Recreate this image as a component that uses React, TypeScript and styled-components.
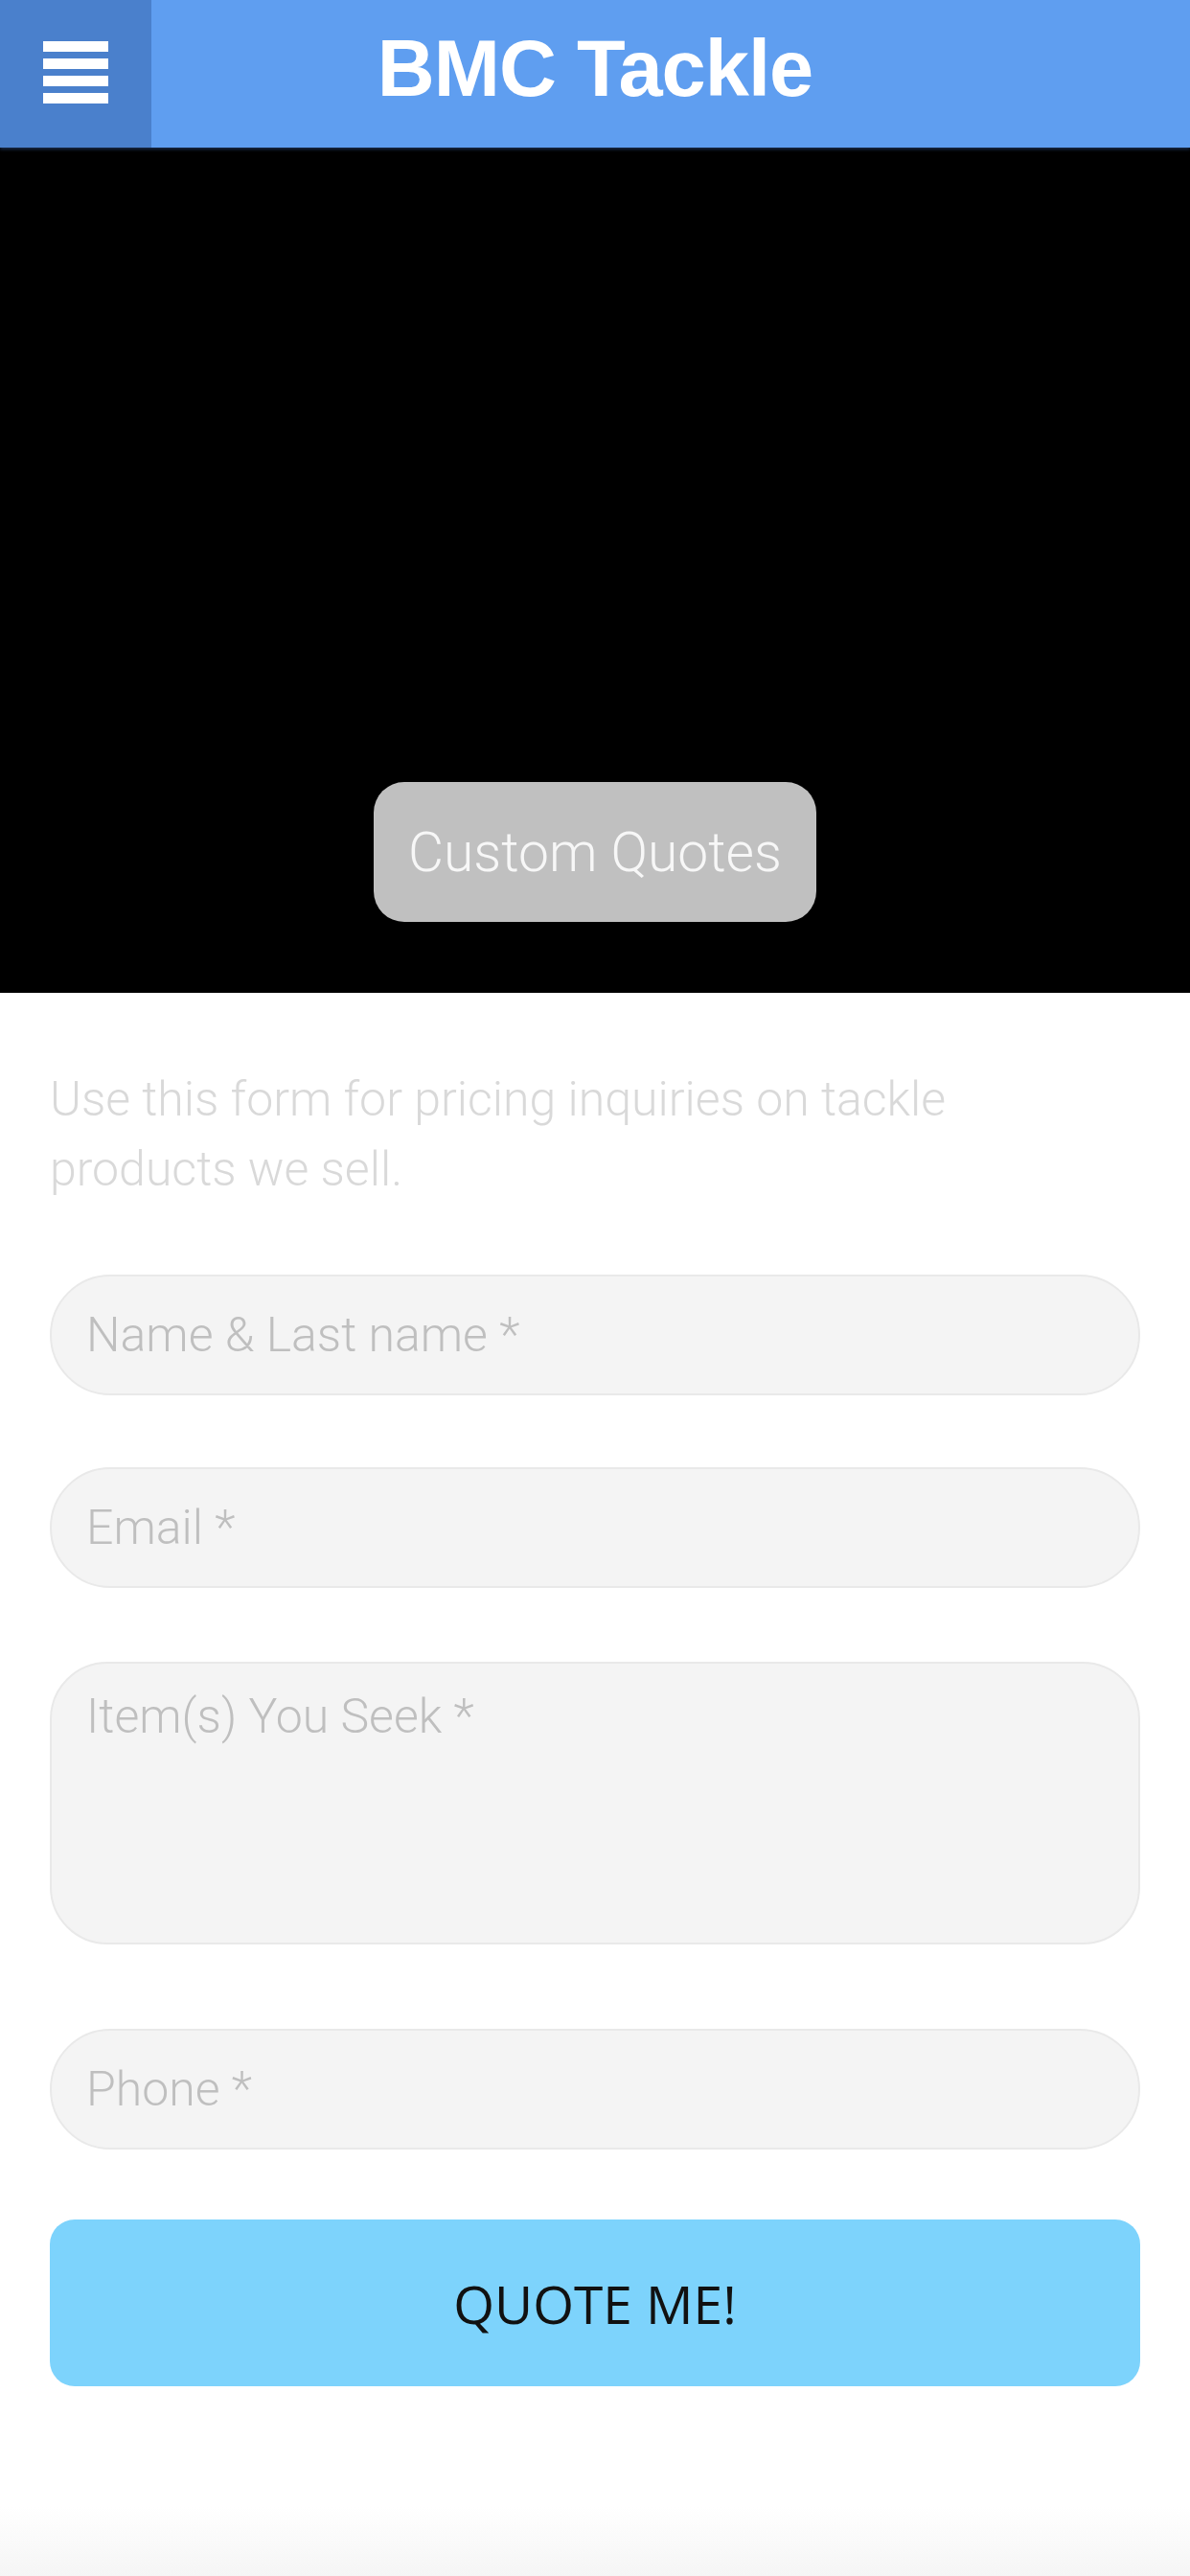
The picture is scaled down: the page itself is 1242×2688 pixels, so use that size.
import React from "react";
import styled, { createGlobalStyle } from "styled-components";

const Global = createGlobalStyle`
  html, body { margin: 0; padding: 0; background: #ffffff; }
  * { box-sizing: border-box; }
`;

const Page = styled.div`
  min-height: 2688px;
  display: flex;
  flex-direction: column;
  background: #ffffff;
`;

const Header = styled.header`
  height: 154px;
  display: grid;
  grid-template-columns: 158px 1fr 158px;
  align-items: center;
  background: #5f9ef0;
  box-shadow: 0 2px 3px rgba(40, 70, 120, 0.6);
  position: relative;
  z-index: 1;
`;

const MenuButton = styled.button`
  height: 154px;
  width: 158px;
  border: none;
  padding: 0 0 4px;
  margin: 0;
  background: #4a80cc;
  display: flex;
  flex-direction: column;
  align-items: center;
  justify-content: center;
  gap: 7px;
`;

const MenuBar = styled.span`
  display: block;
  width: 68px;
  height: 11px;
  background: #ffffff;
`;

const Title = styled.h1`
  margin: 0;
  padding-bottom: 10px;
  text-align: center;
  color: #ffffff;
  font-family: "Liberation Sans", Arial, sans-serif;
  font-weight: 700;
  font-size: 83px;
  letter-spacing: -1px;
`;

const Hero = styled.section`
  height: 882px;
  background: #000000;
  display: flex;
  flex-direction: column;
  align-items: center;
  justify-content: flex-end;
  padding-bottom: 74px;
`;

const HeroButton = styled.button`
  width: 462px;
  height: 146px;
  border: none;
  border-radius: 32px;
  background: #c0c0c0;
  color: #f7f7f7;
  font-family: Roboto, "Noto Sans", sans-serif;
  font-weight: 300;
  font-size: 57px;
  padding: 0;
`;

const Content = styled.main`
  padding: 75px 52px 0;
  display: flex;
  flex-direction: column;
`;

const Intro = styled.p`
  margin: 0 0 73px;
  color: #d9d9d9;
  font-family: Roboto, "Noto Sans", sans-serif;
  font-weight: 300;
  font-size: 50px;
  line-height: 73px;
`;

const Form = styled.form`
  display: flex;
  flex-direction: column;
`;

const fieldBase = `
  width: 100%;
  background: #f4f4f4;
  border: 2px solid #e9e9e9;
  color: #555;
  font-family: Roboto, "Noto Sans", sans-serif;
  font-weight: 300;
  font-size: 50px;
  outline: none;
  &::placeholder { color: #bfbfbf; opacity: 1; }
`;

const Field = styled.input<{ $gap: number }>`
  ${fieldBase}
  height: 126px;
  border-radius: 63px;
  padding: 0 36px;
  margin: 0 0 ${(p) => p.$gap}px;
`;

const Area = styled.textarea<{ $gap: number }>`
  ${fieldBase}
  height: 295px;
  border-radius: 60px;
  padding: 26px 36px;
  line-height: 58px;
  resize: none;
  display: block;
  margin: 0 0 ${(p) => p.$gap}px;
`;

const Submit = styled.button`
  height: 174px;
  width: 100%;
  border: none;
  border-radius: 26px;
  background: #7dd3fc;
  color: #111111;
  font-family: "Open Sans", "Noto Sans", sans-serif;
  font-weight: 400;
  font-size: 55px;
  padding: 0;
`;

const BottomFade = styled.div`
  flex: 1;
  background: linear-gradient(
    to bottom,
    #ffffff 0,
    #ffffff calc(100% - 72px),
    #f5f5f5 100%
  );
`;

export default function App() {
  return (
    <Page>
      <Global />
      <Header>
        <MenuButton aria-label="Menu">
          <MenuBar />
          <MenuBar />
          <MenuBar />
          <MenuBar />
        </MenuButton>
        <Title>BMC Tackle</Title>
        <span />
      </Header>
      <Hero>
        <HeroButton>Custom Quotes</HeroButton>
      </Hero>
      <Content>
        <Intro>
          Use this form for pricing inquiries on tackle
          <br />
          products we sell.
        </Intro>
        <Form onSubmit={(e) => e.preventDefault()}>
          <Field $gap={75} placeholder="Name & Last name *" />
          <Field $gap={77} placeholder="Email *" />
          <Area $gap={88} placeholder="Item(s) You Seek *" />
          <Field $gap={73} placeholder="Phone *" />
          <Submit type="submit">QUOTE ME!</Submit>
        </Form>
      </Content>
      <BottomFade />
    </Page>
  );
}
